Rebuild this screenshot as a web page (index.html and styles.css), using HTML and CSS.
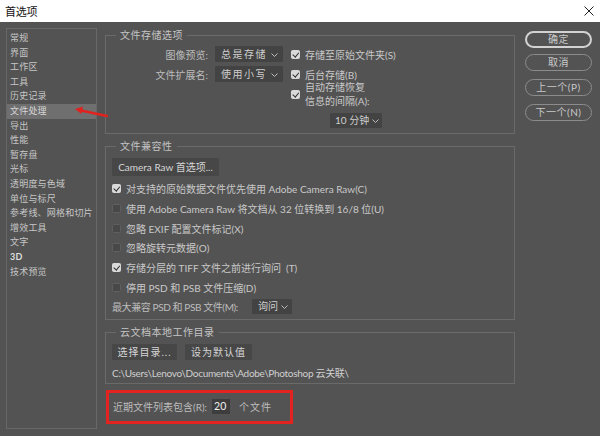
FILE: index.html
```html
<!DOCTYPE html>
<html lang="zh-CN">
<head>
<meta charset="utf-8">
<title>首选项</title>
<link rel="stylesheet" href="styles.css">
</head>
<body>
<div class="titlebar">
  <span class="title">首选项</span>
  <svg class="close" width="10" height="10" viewBox="0 0 10 10"><path d="M0.5 0.5 L9.5 9.5 M9.5 0.5 L0.5 9.5" stroke="#222" stroke-width="1" fill="none"/></svg>
</div>
<div class="window">
  <ul class="sidebar">
    <li>常规</li>
    <li>界面</li>
    <li>工作区</li>
    <li>工具</li>
    <li>历史记录</li>
    <li class="active">文件处理</li>
    <li>导出</li>
    <li>性能</li>
    <li>暂存盘</li>
    <li>光标</li>
    <li>透明度与色域</li>
    <li>单位与标尺</li>
    <li>参考线、网格和切片</li>
    <li>增效工具</li>
    <li>文字</li>
    <li class="bold">3D</li>
    <li>技术预览</li>
  </ul>

  <div class="main">
    <section class="group g1">
      <div class="group-title">文件存储选项</div>
      <div class="g1-body">
        <div class="g1-left">
          <div class="field-row"><span class="label">图像预览:</span><div class="select s-wide">总是存储<svg class="chev" width="7" height="4" viewBox="0 0 7 4"><path d="M0.5 0.5 L3.5 3.5 L6.5 0.5" stroke="#bdbdbd" fill="none"/></svg></div></div>
          <div class="field-row"><span class="label">文件扩展名:</span><div class="select s-wide">使用小写<svg class="chev" width="7" height="4" viewBox="0 0 7 4"><path d="M0.5 0.5 L3.5 3.5 L6.5 0.5" stroke="#bdbdbd" fill="none"/></svg></div></div>
        </div>
        <div class="g1-right">
          <div class="check-row r16"><span class="cb on"></span><span>存储至原始文件夹(S)</span></div>
          <div class="check-row r16 mt4"><span class="cb on"></span><span>后台存储(B)</span></div>
          <div class="check-row r28"><span class="cb on"></span><span class="two">自动存储恢复<br>信息的间隔(A):</span></div>
          <div class="select s-min">10 分钟<svg class="chev" width="7" height="4" viewBox="0 0 7 4"><path d="M0.5 0.5 L3.5 3.5 L6.5 0.5" stroke="#bdbdbd" fill="none"/></svg></div>
        </div>
      </div>
    </section>

    <section class="group g2">
      <div class="group-title">文件兼容性</div>
      <div class="g2-body">
        <div class="btn cr">Camera Raw 首选项...</div>
        <div class="rows">
          <div class="check-row r20"><span class="cb on"></span><span>对支持的原始数据文件优先使用 Adobe Camera Raw(C)</span></div>
          <div class="check-row r20"><span class="cb"></span><span>使用 Adobe Camera Raw 将文档从 32 位转换到 16/8 位(U)</span></div>
          <div class="check-row r20"><span class="cb"></span><span>忽略 EXIF 配置文件标记(X)</span></div>
          <div class="check-row r20"><span class="cb"></span><span>忽略旋转元数据(O)</span></div>
          <div class="check-row r20"><span class="cb on"></span><span>存储分层的 TIFF 文件之前进行询问 &nbsp;(T)</span></div>
          <div class="check-row r20"><span class="cb"></span><span>停用 PSD 和 PSB 文件压缩(D)</span></div>
          <div class="check-row r20"><span class="label tight">最大兼容 PSD 和 PSB 文件(M):</span><div class="select s-ask">询问<svg class="chev" width="7" height="4" viewBox="0 0 7 4"><path d="M0.5 0.5 L3.5 3.5 L6.5 0.5" stroke="#bdbdbd" fill="none"/></svg></div></div>
        </div>
      </div>
    </section>

    <section class="group g3">
      <div class="group-title">云文档本地工作目录</div>
      <div class="g3-body">
        <div class="btn-row">
          <div class="btn b1">选择目录...</div>
          <div class="btn b2">设为默认值</div>
        </div>
        <div class="path">C:\Users\Lenovo\Documents\Adobe\Photoshop 云关联\</div>
      </div>
    </section>

    <div class="recent">
      <span class="label">近期文件列表包含(R):</span>
      <span class="num">20</span>
      <span class="label unit">个文件</span>
    </div>
  </div>

  <div class="actions">
    <div class="pill primary">确定</div>
    <div class="pill">取消</div>
    <div class="pill">上一个(P)</div>
    <div class="pill">下一个(N)</div>
  </div>

  <svg class="arrow" width="40" height="16" viewBox="0 0 40 16">
    <path d="M35 12 L9 6.5" stroke="#e0231f" stroke-width="2.4" fill="none" stroke-linecap="round"/>
    <path d="M3 5 L11 2.5 L9.5 10 Z" fill="#e0231f"/>
  </svg>
</div>
</body>
</html>
```

FILE: styles.css
```css
* { box-sizing: border-box; }
html, body { margin: 0; padding: 0; }
body {
  width: 600px;
  height: 436px;
  background: #535353;
  font-family: Lato, "Noto Sans CJK SC", sans-serif;
  font-size: 10px;
  color: #c9c9c9;
  overflow: hidden;
}

.titlebar {
  height: 22px;
  background: #ffffff;
  display: flex;
  align-items: center;
  justify-content: space-between;
  padding: 0 6px 0 5px;
}
.title { font-size: 11px; color: #111; letter-spacing: -0.3px; }

.window {
  position: relative;
  display: flex;
  align-items: flex-start;
  padding: 6px 0 0 6px;
}

/* sidebar */
.sidebar {
  list-style: none;
  margin: 0;
  padding: 2px 0 0 0;
  width: 91px;
  height: 401px;
  border: 1px solid #686868;
}
.sidebar li {
  height: 14.6px;
  line-height: 14.6px;
  padding-left: 3px;
  font-size: 9px;
  letter-spacing: 0.2px;
  color: #c6c6c6;
  white-space: nowrap;
}
.sidebar li.active { background: #6f6f6f; color: #d6d6d6; }
.sidebar li.bold { font-weight: 700; color: #dedede; }

/* main column */
.main {
  width: 410px;
  margin-left: 8px;
  padding-top: 7px;
}
.group {
  border: 1px solid #6a6a6a;
}
.group-title {
  width: fit-content;
  height: 12px;
  line-height: 12px;
  margin: -7px 0 0 10px;
  padding: 0 4px;
  background: #535353;
  color: #c4c4c4;
  letter-spacing: 0.5px;
}

.label { color: #bdbdbd; white-space: nowrap; }
.label.tight { letter-spacing: -0.4px; }

.select {
  position: relative;
  height: 16px;
  line-height: 16px;
  background: #434343;
  color: #cfcfcf;
  padding-left: 6px;
  border-radius: 1px;
  white-space: nowrap;
}
.chev { position: absolute; right: 5px; top: 7px; }
.s-wide { width: 68px; letter-spacing: 1.5px; }
.s-min { width: 52px; height: 15px; line-height: 15px; margin: 5px 0 0 39px; padding-left: 5px; }
.s-min .chev { right: 3px; top: 6px; }
.s-ask { width: 40px; height: 15px; line-height: 15px; margin-left: 9px; }
.s-ask .chev { right: 4px; top: 6px; }

/* group 1 */
.g1-body {
  display: flex;
  padding: 5px 0 5px 0;
}
.g1-left {
  width: 177px;
  display: flex;
  flex-direction: column;
  gap: 4px;
}
.field-row {
  display: flex;
  justify-content: flex-end;
  align-items: center;
  gap: 7px;
  height: 16px;
}
.g1-right { margin-left: 8px; }

.check-row {
  display: flex;
  align-items: center;
  gap: 5px;
  white-space: nowrap;
}
.r16 { height: 16px; }
.r20 { height: 19.7px; }
.r28 { height: 28px; margin-top: -2px; }
.mt4 { margin-top: 4px; }
.two { line-height: 14px; }

.cb {
  flex: none;
  position: relative;
  width: 9px;
  height: 9px;
  border-radius: 1.5px;
  background: #484848;
  border: 1px solid #5f5f5f;
}
.cb.on { background: #d9d9d9; border-color: #d9d9d9; }
.cb.on::after {
  content: "";
  position: absolute;
  left: 1.5px;
  top: 0px;
  width: 2.5px;
  height: 4.5px;
  border: solid #2e2e2e;
  border-width: 0 1.4px 1.4px 0;
  transform: rotate(40deg);
}

/* group 2 */
.g2 { margin-top: 12px; }
.g2-body { padding: 6px 0 2px 6px; }
.btn {
  height: 18px;
  line-height: 18px;
  background: #474747;
  color: #d6d6d6;
  text-align: center;
  border-radius: 1px;
  white-space: nowrap;
}
.cr { width: 107px; }
.rows { margin-top: 3px; }

/* group 3 */
.g3 { margin-top: 12px; }
.g3-body { padding: 6px 0 4px 6px; }
.btn-row { display: flex; gap: 8px; }
.btn-row .btn { height: 16px; line-height: 16px; letter-spacing: 1px; }
.b1 { width: 65px; }
.b2 { width: 67px; }
.path { margin-top: 7px; height: 12px; line-height: 12px; color: #cfcfcf; letter-spacing: -0.3px; }

/* recent files */
.recent {
  margin: 6px 0 0 1px;
  width: 187px;
  height: 34px;
  border: 3px solid #e2231f;
  display: flex;
  align-items: center;
  padding-left: 4px;
}
.num {
  width: 18px;
  height: 15px;
  line-height: 15px;
  background: #3d3d3d;
  color: #f0f0f0;
  padding-left: 2px;
  margin-left: 5px;
  font-size: 10.5px;
}
.unit { margin-left: 9px; letter-spacing: 1px; }

/* action buttons */
.actions {
  margin-left: 10px;
  padding-top: 3px;
  width: 67px;
  display: flex;
  flex-direction: column;
}
.pill {
  height: 17px;
  line-height: 15px;
  border: 1px solid #8c8c8c;
  border-radius: 9px;
  text-align: center;
  color: #c9c9c9;
  margin-top: 8px;
  letter-spacing: 0.5px;
}
.pill.primary {
  margin-top: 0;
  border: 2px solid #d2d2d2;
  line-height: 13px;
}
.pill.primary + .pill { margin-top: 6px; }

.arrow {
  position: absolute;
  left: 72px;
  top: 82px;
}
```
